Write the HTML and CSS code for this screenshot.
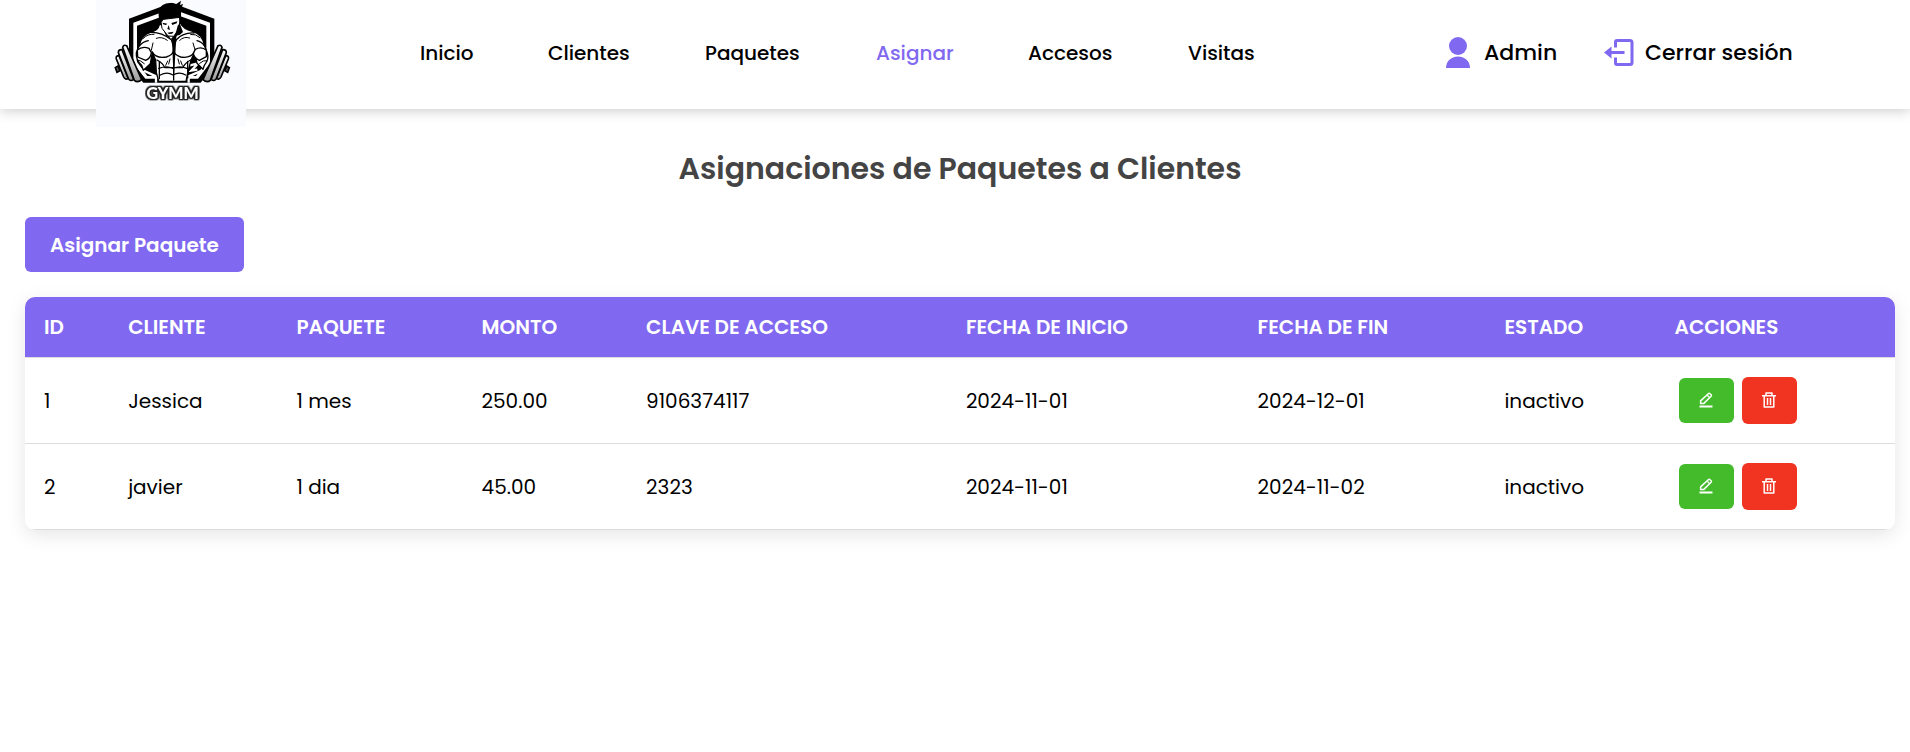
FILE: index.html
```html
<!DOCTYPE html>
<html lang="es">
<head>
<meta charset="utf-8">
<meta name="viewport" content="width=device-width, initial-scale=1">
<title>Asignaciones de Paquetes a Clientes</title>
<link rel="stylesheet" href="styles.css">
</head>
<body>
<svg class="sprite" aria-hidden="true">
  <symbol id="pencil" viewBox="0 0 14 16">
    <path d="M1.600 11.600V8.900L9.300 1.700Q10.200 1 11 1.700L12.100 2.700Q12.900 3.500 12.100 4.300L4.600 11.600Z" fill="none" stroke="#fff" stroke-width="1.500" stroke-linejoin="round"/>
    <path d="M8.200 3.200 10.800 5.700" stroke="#fff" stroke-width="1.200"/>
    <path d="M0.500 14.500H13.500" stroke="#fff" stroke-width="1.800"/>
  </symbol>
  <symbol id="trash" viewBox="0 0 14 16">
    <path d="M0 3.800H14M4 3.800V1H10V3.800M2.200 4V15H11.800V4M5.500 6V13M8.500 6V13" fill="none" stroke="#fff" stroke-width="1.500" stroke-linejoin="round"/>
  </symbol>
</svg>

<header class="header">
  <a class="logo" href="#" aria-label="Inicio del gimnasio">
    <svg viewBox="48 0 450 381">
      <defs>
        <linearGradient id="plate" x1="0" y1="0" x2="0" y2="1">
          <stop offset="0" stop-color="#fff"/><stop offset="1" stop-color="#9a9a9a"/>
        </linearGradient>
        <g id="weights">
          <path d="M106 203l8-5 6 14-9 5Z" fill="#555"/>
          <path d="M109 177q-3-10 8-10l28 68q-9 6-14-4Z"/>
          <path d="M115 158q0-10 11-9l35 89q-10 8-16-2Z"/>
          <path d="M128 142q2-9 12-5l45 102q-12 11-22 2Z"/>
        </g>
      </defs>
      <rect x="48" width="450" height="381" fill="#fafbfe"/>
      <path d="M275 8 403 56V196L362 248H190L147 196V56Z"/>
      <path d="M275 26 390 68V190L354 236H196L160 190V68Z" fill="#fff"/>
      <path d="M275 39 379 77V186L348 228H202L171 186V77Z"/>
      <path d="M187 210 228 229V248M366 212 326 229V248M330 196l24-6-20 22 18-3" fill="none" stroke="#fff" stroke-width="7"/>
      <g stroke="#000" stroke-width="4" stroke-linejoin="round" stroke-linecap="round">
        <path fill="#fff" d="M238 74Q234 92 213 96 184 104 178 136L169 158Q167 181 185 196L190 211 211 191 217 157 227 181 229 217 236 244H318L324 214 333 181 344 155 351 190 369 208 373 196Q389 178 381 157L374 139Q369 103 338 94 309 87 302 70Z"/>
        <path fill="none" d="M216 155Q228 177 259 171 279 165 281 150 283 165 302 171 332 176 344 155M281 112V240M231 180Q250 190 254 203H308Q317 187 332 180M236 205Q260 196 279 205 300 196 320 205M241 225Q261 214 279 225 298 214 317 225M238 184V236M323 184V234M213 97Q244 96 274 119L281 142 289 119Q310 97 342 99M178 138Q188 125 205 122M374 138Q365 125 351 122"/>
        <path fill="none" stroke-width="3" d="M190 115Q203 101 222 103M229 115Q245 108 262 121M360 113Q348 101 332 103M329 114Q312 108 299 121M219 129 214 151M339 129 345 149M263 183 257 196M302 183 307 196M193 191Q180 179 171 180M359 190Q371 179 380 182M270 177 266 192M294 177 298 192"/>
        <path fill="#fff" d="M172 150Q187 137 207 145L214 158Q212 175 197 181L173 171ZM346 148Q365 138 379 151V170L358 181Q342 174 340 160Z"/>
      </g>
      <path d="M281 245 289 111 302 83 273 117 244 74 258 107 276 118Z"/>
      <path fill="#fff" stroke="#000" stroke-width="3" d="M242 59 246 85 264 108 281 109 298 85 300 52Z"/>
      <path d="M238 63Q230 26 248 15 264 5 289 12L303 2 300 16 309 11 303 31Q305 48 300 69L296 48 276 43 254 51 246 66Z"/>
      <path d="M248 68 262 71 258 75 249 73ZM274 69 292 64 290 70 277 75ZM266 75 262 87 270 90ZM262 98 281 95 276 101 267 102ZM293 77 299 70 309 96 299 105 285 108Z"/>
      <g fill="url(#plate)" stroke="#000" stroke-width="5">
        <use href="#weights"/>
        <use href="#weights" transform="translate(554) scale(-1 1)"/>
      </g>
      <text class="logo-name" x="278" y="297" text-anchor="middle">GYMM</text>
    </svg>
  </a>
  <nav class="nav">
    <a href="#">Inicio</a>
    <a href="#">Clientes</a>
    <a href="#">Paquetes</a>
    <a class="active" href="#" aria-current="page">Asignar</a>
    <a href="#">Accesos</a>
    <a href="#">Visitas</a>
  </nav>
  <div class="account">
    <a class="user" href="#">
      <svg class="user-icon" viewBox="0 0 24 31"><circle cx="12" cy="9" r="9"/><path d="M0 31C0 15.500 24 15.500 24 31Z"/></svg>
      Admin
    </a>
    <a href="#">
      <svg class="exit-icon" viewBox="0 0 30 27"><path d="M11.500 8.500V3Q11.500 1.500 13 1.500H26Q28 1.500 28 3.500V23.500Q28 25.500 26 25.500H13Q11.500 25.500 11.500 24V18.500M20.500 13.500H5" fill="none" stroke="#8069f0" stroke-width="3"/><path d="M0 13.500 7.500 7.500V19.500Z"/></svg>
      Cerrar sesión
    </a>
  </div>
</header>

<main class="content">
  <h1 class="title">Asignaciones de Paquetes a Clientes</h1>
  <button class="assign" type="button">Asignar Paquete</button>
  <table class="table">
    <colgroup>
      <col class="c-id"><col class="c-client"><col class="c-package"><col class="c-amount"><col class="c-key"><col class="c-start"><col class="c-end"><col class="c-state"><col>
    </colgroup>
    <thead>
      <tr><th>ID</th><th>CLIENTE</th><th>PAQUETE</th><th>MONTO</th><th>CLAVE DE ACCESO</th><th>FECHA DE INICIO</th><th>FECHA DE FIN</th><th>ESTADO</th><th>ACCIONES</th></tr>
    </thead>
    <tbody>
      <tr>
        <td>1</td><td>Jessica</td><td>1 mes</td><td>250.00</td><td>9106374117</td><td>2024-11-01</td><td>2024-12-01</td><td>inactivo</td>
        <td><div class="actions">
          <button class="edit" type="button" aria-label="Editar"><svg><use href="#pencil"/></svg></button>
          <button class="delete" type="button" aria-label="Eliminar"><svg><use href="#trash"/></svg></button>
        </div></td>
      </tr>
      <tr>
        <td>2</td><td>javier</td><td>1 dia</td><td>45.00</td><td>2323</td><td>2024-11-01</td><td>2024-11-02</td><td>inactivo</td>
        <td><div class="actions">
          <button class="edit" type="button" aria-label="Editar"><svg><use href="#pencil"/></svg></button>
          <button class="delete" type="button" aria-label="Eliminar"><svg><use href="#trash"/></svg></button>
        </div></td>
      </tr>
    </tbody>
  </table>
</main>
</body>
</html>
```

FILE: styles.css
```css
* {
  box-sizing: border-box;
}

body {
  margin: 0;
  background: #fff;
  color: #000;
  font-family: Poppins, Inter, "Open Sans", sans-serif;
  font-size: 20px;
  line-height: 28px;
}

a {
  color: inherit;
  text-decoration: none;
}

button {
  border: 0;
  border-radius: 6px;
  color: #fff;
  font: inherit;
  cursor: pointer;
}

.sprite {
  display: none;
}

.header {
  display: grid;
  grid-template-columns: 324fr 1026fr 347fr;
  grid-template-rows: 100%;
  align-items: center;
  height: 109px;
  padding: 0 117px 0 96px;
  box-shadow: 0 2px 12px rgba(0, 0, 0, 0.2);
}

.logo {
  align-self: start;
  width: 150px;
  height: 127px;
}

.logo svg {
  display: block;
  width: 100%;
  height: 100%;
}

.logo-name {
  fill: #fff;
  font-family: Lato, sans-serif;
  font-size: 48px;
  font-weight: 900;
  filter: drop-shadow(4px 0 0 #222) drop-shadow(-4px 0 0 #222) drop-shadow(0 4px 0 #222) drop-shadow(0 -4px 0 #222);
}

.nav {
  display: grid;
  grid-template-columns: 128fr 157fr 171fr 152fr 160fr 258fr;
  padding-bottom: 4px;
  font-weight: 500;
}

.nav .active {
  color: #8069f0;
}

.account {
  display: grid;
  grid-template-columns: 158fr 189fr;
  padding-bottom: 4px;
  font-size: 22px;
  font-weight: 500;
}

.account a {
  display: flex;
  align-items: center;
  gap: 11px;
  white-space: nowrap;
}

.account .user {
  gap: 14px;
}

.account svg {
  flex: none;
  fill: #8069f0;
}

.user-icon {
  width: 24px;
  height: 31px;
}

.exit-icon {
  width: 30px;
  height: 27px;
}

.content {
  padding: 38px 15px 38px 25px;
}

.title {
  margin: 0 0 27px;
  color: #444;
  font-size: 30px;
  font-weight: 600;
  line-height: 43px;
  text-align: center;
}

.assign {
  display: block;
  min-height: 55px;
  margin-bottom: 25px;
  padding: 0 25px;
  background: #8069f0;
  font-weight: 600;
}

.table {
  width: 100%;
  table-layout: fixed;
  border-collapse: collapse;
  border-radius: 10px;
  overflow: hidden;
  box-shadow: 0 5px 19px rgba(0, 0, 0, 0.1);
}

.c-id { width: 4.5%; }
.c-client { width: 9%; }
.c-package { width: 9.9%; }
.c-amount { width: 8.8%; }
.c-key { width: 17.1%; }
.c-start { width: 15.6%; }
.c-end { width: 13.2%; }
.c-state { width: 9.1%; }

th,
td {
  padding: 16px 19px;
  border-bottom: 1px solid #ddd;
  text-align: left;
  white-space: nowrap;
}

th {
  background: #8069f0;
  color: #fff;
  font-weight: 600;
}

td {
  padding-top: 19px;
  padding-bottom: 19px;
}

.actions {
  display: flex;
  align-items: center;
  gap: 8px;
  padding-left: 4px;
}

.actions button {
  display: flex;
  align-items: center;
  justify-content: center;
  width: 55px;
  height: 45px;
  padding: 0 0 2px;
}

.actions .edit {
  background: #43bb2b;
}

.actions .delete {
  height: 47px;
  background: #f13321;
}

.actions svg {
  width: 14px;
  height: 16px;
}
```
